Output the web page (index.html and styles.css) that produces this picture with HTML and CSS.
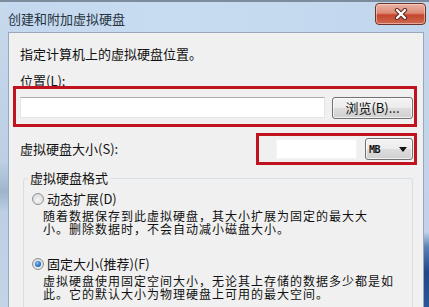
FILE: index.html
```html
<!DOCTYPE html>
<html lang="zh-CN">
<head>
<meta charset="utf-8">
<title>创建和附加虚拟硬盘</title>
<link rel="stylesheet" href="styles.css">
</head>
<body>
<div class="window">
  <div class="titlebar">
    <span class="title">创建和附加虚拟硬盘</span>
    <button class="close" aria-label="关闭">
      <svg width="16" height="12" viewBox="0 0 16 12">
        <path d="M4 2 L12 10 M12 2 L4 10" stroke="#5a2a22" stroke-width="4.2" stroke-linecap="round"/>
        <path d="M4 2 L12 10 M12 2 L4 10" stroke="#ffffff" stroke-width="2.2" stroke-linecap="round"/>
      </svg>
    </button>
  </div>
  <div class="client">
    <p class="intro">指定计算机上的虚拟硬盘位置。</p>
    <div class="label">位置(L):</div>
    <div class="path-row">
      <input class="textbox path" type="text">
      <button class="btn browse">浏览(B)...</button>
    </div>
    <div class="size-row">
      <span class="size-label">虚拟硬盘大小(S):</span>
      <div class="size-controls">
        <input class="textbox size" type="text">
        <div class="combo"><span class="unit">MB</span><span class="arrow"></span></div>
      </div>
    </div>
    <fieldset class="group">
      <legend>虚拟硬盘格式</legend>
      <div class="option"><span class="radio"></span><span>动态扩展(D)</span></div>
      <div class="desc">
        <span class="line">随着数据保存到此虚拟硬盘，其大小扩展为固定的最大大</span>
        <span class="line">小。删除数据时，不会自动减小磁盘大小。</span>
      </div>
      <div class="option option-second"><span class="radio checked"></span><span>固定大小(推荐)(F)</span></div>
      <div class="desc">
        <span class="line">虚拟硬盘使用固定空间大小，无论其上存储的数据多少都是如</span>
        <span class="line">此。它的默认大小为物理硬盘上可用的最大空间。</span>
      </div>
    </fieldset>
  </div>
  <div class="mark mark-path"></div>
  <div class="mark mark-size"></div>
</div>
</body>
</html>
```

FILE: styles.css
```css
* { box-sizing: border-box; }

html, body {
  margin: 0;
  padding: 0;
}

body {
  width: 429px;
  height: 307px;
  overflow: hidden;
  font-family: "Noto Sans CJK SC", "Noto Sans", sans-serif;
  font-size: 13px;
  color: #111111;
}

.window {
  position: relative;
  width: 429px;
  height: 307px;
  overflow: hidden;
  border-top: 2px solid #7d8c9c;
  background:
    linear-gradient(#c4d6ea 0, #c0d3e8 230px, #5a82b4 245px, #1f4a86 270px, #2a5796 307px) right top / 5px 100% no-repeat,
    linear-gradient(#c6d9ed 0, #bccfe4 160px, #9fb5cc 190px, #bccfe4 210px, #c2d4e8 307px) left top / 8px 100% no-repeat,
    linear-gradient(to right, #c3d8ee, #c8dcf1 40%, #c1d6ec);
  display: flex;
  flex-direction: column;
}

.titlebar {
  height: 30px;
  flex: none;
  display: flex;
  justify-content: space-between;
  align-items: flex-start;
  padding: 0 3px 0 8px;
}

.title {
  margin-top: 9px;
  font-size: 13px;
  line-height: 16px;
  color: #27333f;
}

.close {
  width: 51px;
  height: 22px;
  margin-top: 1px;
  padding: 0;
  border: 1px solid #6e3328;
  border-radius: 4px;
  background: linear-gradient(#eab3a6 0, #dd8a76 45%, #c4452d 55%, #cf6a50 100%);
  box-shadow: inset 0 0 0 1px rgba(255, 220, 210, 0.55);
  display: flex;
  align-items: center;
  justify-content: center;
}

.client {
  flex: 1;
  margin: 0 5px 0 8px;
  border: 1px solid #98a8b9;
  border-bottom: none;
  background: #f0f0f0;
  padding: 13px 10px 0 11px;
}

.intro {
  margin: 0;
  line-height: 16px;
}

.label {
  margin-top: 11px;
  line-height: 16px;
}

.path-row {
  margin-top: 8px;
  display: flex;
  gap: 7px;
  align-items: flex-start;
}

.textbox {
  display: block;
  margin: 0;
  padding: 0;
  background: #ffffff;
  border: 1px solid #dfe5ea;
  border-top-color: #abadb3;
}

.path {
  flex: 1;
  height: 21px;
}

.btn {
  margin: 0;
  padding: 0;
  font-family: inherit;
  font-size: 13px;
  color: #111111;
  border: 1px solid #707070;
  border-radius: 3px;
  background: linear-gradient(#f3f3f3 0, #ececec 50%, #dddddd 50%, #cfcfcf 100%);
  box-shadow: inset 0 0 0 1px rgba(255, 255, 255, 0.7);
}

.browse {
  width: 81px;
  height: 22px;
  line-height: 18px;
}

.size-row {
  margin-top: 19px;
  display: flex;
  justify-content: space-between;
  align-items: center;
}

.size-label {
  line-height: 16px;
}

.size-controls {
  display: flex;
  align-items: center;
  gap: 8px;
}

.size {
  width: 81px;
  height: 20px;
  border-color: #f4f4f4;
}

.combo {
  width: 48px;
  height: 22px;
  border: 1px solid #707070;
  border-radius: 3px;
  background: linear-gradient(#f3f3f3 0, #ececec 50%, #dddddd 50%, #cfcfcf 100%);
  box-shadow: inset 0 0 0 1px rgba(255, 255, 255, 0.7);
  display: flex;
  align-items: center;
  justify-content: space-between;
  padding: 0 5px 0 3px;
}

.unit {
  font-family: "DejaVu Sans Mono", monospace;
  font-weight: bold;
  font-size: 10px;
  letter-spacing: -0.5px;
}

.arrow {
  width: 0;
  height: 0;
  border-left: 4px solid transparent;
  border-right: 4px solid transparent;
  border-top: 5px solid #111111;
}

.group {
  margin: 10px 0 0 3px;
  padding: 0 8px 40px 8px;
  border: 1px solid #d5dfe5;
  border-radius: 3px;
  min-width: 0;
}

.group legend {
  margin-left: -4px;
  padding: 0 2px;
  line-height: 16px;
}

.option {
  margin-top: 5px;
  display: flex;
  align-items: center;
  gap: 3px;
  line-height: 16px;
}

.option-second {
  margin-top: 21px;
}

.radio {
  width: 12px;
  height: 12px;
  flex: none;
  border-radius: 50%;
  border: 1px solid #8f9396;
  background: radial-gradient(circle at 50% 60%, #f6f6f6 0, #e2e2e2 55%, #cfcfcf 100%);
  display: flex;
  align-items: center;
  justify-content: center;
}

.radio.checked::after {
  content: "";
  width: 6px;
  height: 6px;
  border-radius: 50%;
  background: radial-gradient(circle at 40% 35%, #8cc4f4 0, #2b72c9 55%, #1b4f95 100%);
}

.desc {
  margin: 2px 0 0 11px;
  display: flex;
  flex-direction: column;
  font-size: 12px;
  letter-spacing: 1px;
  line-height: 13px;
  white-space: nowrap;
}

.line {
  display: block;
  height: 13px;
}

.mark {
  position: absolute;
  border: 3px solid #c1121f;
}

.mark-path {
  left: 13px;
  top: 84px;
  width: 404px;
  height: 41px;
}

.mark-size {
  left: 256px;
  top: 131px;
  width: 161px;
  height: 32px;
}
```
